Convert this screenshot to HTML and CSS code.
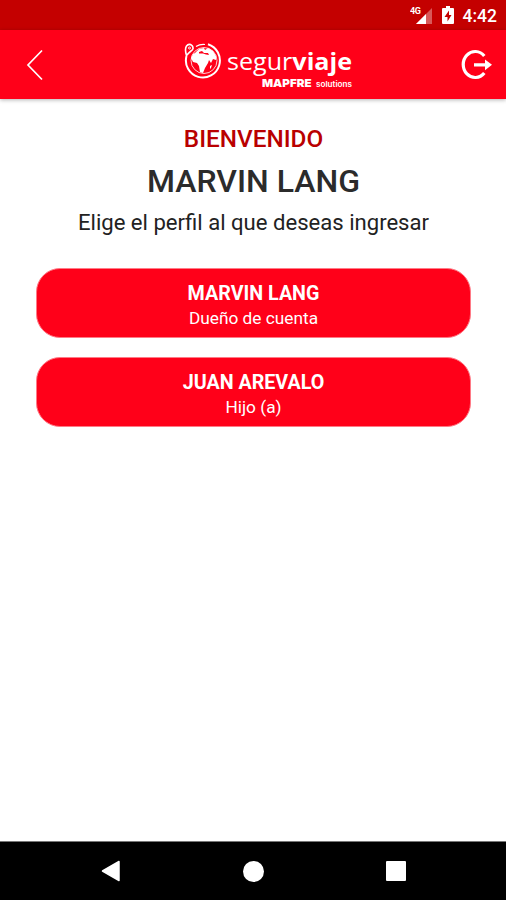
FILE: index.html
```html
<!DOCTYPE html>
<html lang="es">

<head>
  <meta charset="UTF-8">
  <meta name="viewport" content="width=device-width, initial-scale=1.0">
  <title>Segurviaje - Perfiles</title>
  <link rel="stylesheet" href="styles.css">
</head>

<body>
  <div class="status-bar">
    <svg class="signal" width="25" height="20" viewBox="0 0 25 20">
      <path d="M22 3v16H6z" fill="#fff" opacity=".35"/>
      <path d="M16 9v10H6z" fill="#fff"/>
      <text class="network" x="0" y="9" textLength="11">4G</text>
    </svg>
    <svg class="battery" width="12" height="18" viewBox="0 0 12 18">
      <path d="M4 0h4v2h3q1 0 1 1v14q0 1-1 1H1q-1 0-1-1V3q0-1 1-1h3z" fill="#fff"/>
      <path d="M7 4.500L2.500 11H5.500V15.500L9.500 9H7z" fill="#c40000"/>
    </svg>
    <span class="clock">4:42</span>
  </div>

  <header class="header">
    <a class="back" href="#" aria-label="Volver">
      <svg width="18" height="32" viewBox="0 0 18 32">
        <path d="M16 1.500L2 16l14 14.500" fill="none" stroke="#fff" stroke-width="1.700"/>
      </svg>
    </a>
    <div class="logo">
      <svg class="globe" width="38" height="38" viewBox="0 0 38 38">
        <g fill="none" stroke="#fff">
          <path d="M24 2.300A17 17 0 1 1 2.500 14" stroke-width="2"/>
          <circle cx="20" cy="18.500" r="13" stroke-width=".8"/>
          <path d="M12 4.500Q16 2 21 2.500" stroke-width="1.200"/>
          <path d="M2.500 13.500Q0.500 7 2.500 4Q5 1 8 3.500Q10.500 7 7 9Q5 10.500 2.500 13.500z" stroke-width="1.600"/>
          <circle cx="5.500" cy="6" r="1" stroke-width="1"/>
        </g>
        <path d="M11 11l4-4 5-1 1 2 3-2 5 3 3 5v4l-3-1-2 4-2-3-1 3-3 5-2 5-3-1-1-6-2-3-4-1-2-4 2-4z" fill="#fff"/>
        <path d="M15 10l3-1 2 2 4 0 1 2-3-.500-3-1-4 0z" fill="#ff0019"/>
        <path d="M26 24l2-1-1 3-1 1z" fill="#fff"/>
      </svg>
      <div class="brand">
        <svg width="130" height="52" viewBox="0 0 130 52">
          <text class="brand-name" x="0" y="28" textLength="125" lengthAdjust="spacingAndGlyphs">segur<tspan class="strong">viaje</tspan></text>
          <text class="brand-owner" x="35" y="44.500" textLength="49.500" lengthAdjust="spacingAndGlyphs">MAPFRE</text>
          <text class="brand-tag" x="89" y="44.500" textLength="36" lengthAdjust="spacingAndGlyphs">solutions</text>
        </svg>
      </div>
    </div>
    <a class="logout" href="#" aria-label="Salir">
      <svg width="32" height="32" viewBox="0 0 32 32">
        <path d="M23.300 7A12 13 0 1 0 23.300 24" fill="none" stroke="#fff" stroke-width="3.200"/>
        <path d="M13 14.300H24V10.500L31 15.800l-7 5.500V17.500H13z" fill="#fff"/>
      </svg>
    </a>
  </header>

  <main class="content">
    <h2 class="welcome">BIENVENIDO</h2>
    <h1 class="user">MARVIN LANG</h1>
    <p class="hint">Elige el perfil al que deseas ingresar</p>

    <div class="profiles">
      <button class="profile">
        <span class="profile-name">MARVIN LANG</span>
        <span class="profile-role">Dueño de cuenta</span>
      </button>
      <button class="profile">
        <span class="profile-name">JUAN AREVALO</span>
        <span class="profile-role">Hijo (a)</span>
      </button>
    </div>
  </main>

  <nav class="nav-bar">
    <svg width="20" height="22" viewBox="0 0 20 22">
      <path d="M18 1.500v19L1.500 11z" fill="#fff" stroke="#fff" stroke-width="1.500" stroke-linejoin="round"/>
    </svg>
    <span class="nav-home"></span>
    <span class="nav-recent"></span>
  </nav>
</body>

</html>
```

FILE: styles.css
```css
* {
  box-sizing: border-box;
}

body {
  font-family: Roboto, sans-serif;
  background-color: #fff;
  display: flex;
  flex-direction: column;
  height: 100vh;
  margin: 0;
}

svg {
  display: block;
}

.status-bar {
  display: flex;
  justify-content: flex-end;
  align-items: flex-start;
  height: 30px;
  padding: 5px 9px 0 0;
  background-color: #c40000;
  color: #fff;
}

.network {
  font-size: 9px;
  font-weight: bold;
  fill: #fff;
}

.battery {
  margin: 1px 9px 0 7px;
}

.clock {
  font-size: 17.5px;
  font-weight: 500;
  line-height: 22px;
}

.header {
  display: flex;
  justify-content: space-between;
  height: 69px;
  padding: 0 13px 0 26px;
  background-color: #ff0019;
  box-shadow: 0 1px 4px rgba(0, 0, 0, 0.3);
}

.back {
  padding-top: 19px;
}

.logout {
  padding-top: 19px;
}

.logo {
  display: flex;
  gap: 5px;
  padding: 12px 0 0 36px;
}

.brand-name {
  font-family: "Open Sans", sans-serif;
  font-size: 24px;
  fill: #fff;
}

.strong {
  font-weight: bold;
}

.brand-owner {
  font-family: Inter, sans-serif;
  font-size: 11px;
  font-weight: 900;
  fill: #fff;
}

.brand-tag {
  font-family: Inter, sans-serif;
  font-size: 7.5px;
  font-weight: 600;
  fill: #fff;
}

.content {
  flex: 1;
  padding: 24px 35px 0 36px;
  text-align: center;
}

.welcome {
  margin: 0;
  color: #b90000;
  font-size: 24.3px;
  font-weight: 500;
  line-height: 32px;
}

.user {
  margin: 6px 0 0;
  color: #2b2b2b;
  font-size: 32px;
  font-weight: 500;
  line-height: 40px;
}

.hint {
  margin: 6px 0 0;
  color: #222;
  font-size: 22.1px;
  line-height: 30px;
}

.profiles {
  display: flex;
  flex-direction: column;
  gap: 19px;
  margin-top: 31px;
}

.profile {
  display: flex;
  flex-direction: column;
  align-items: center;
  height: 70px;
  padding: 13px 0 0;
  border: 1px solid #ff7a86;
  border-radius: 24px;
  background-color: #ff0019;
  color: #fff;
  font-family: inherit;
  cursor: pointer;
}

.profile-name {
  font-size: 19.7px;
  font-weight: bold;
  line-height: 24px;
}

.profile-role {
  font-size: 17.3px;
  line-height: 24px;
}

.nav-bar {
  display: flex;
  justify-content: space-between;
  align-items: center;
  height: 59px;
  padding: 0 100px 0 101px;
  border-top: 1px solid #777;
  background-color: #000;
}

.nav-home {
  width: 21px;
  height: 21px;
  border-radius: 50%;
  background-color: #fff;
}

.nav-recent {
  width: 20px;
  height: 20px;
  border-radius: 1px;
  background-color: #fff;
}
```
